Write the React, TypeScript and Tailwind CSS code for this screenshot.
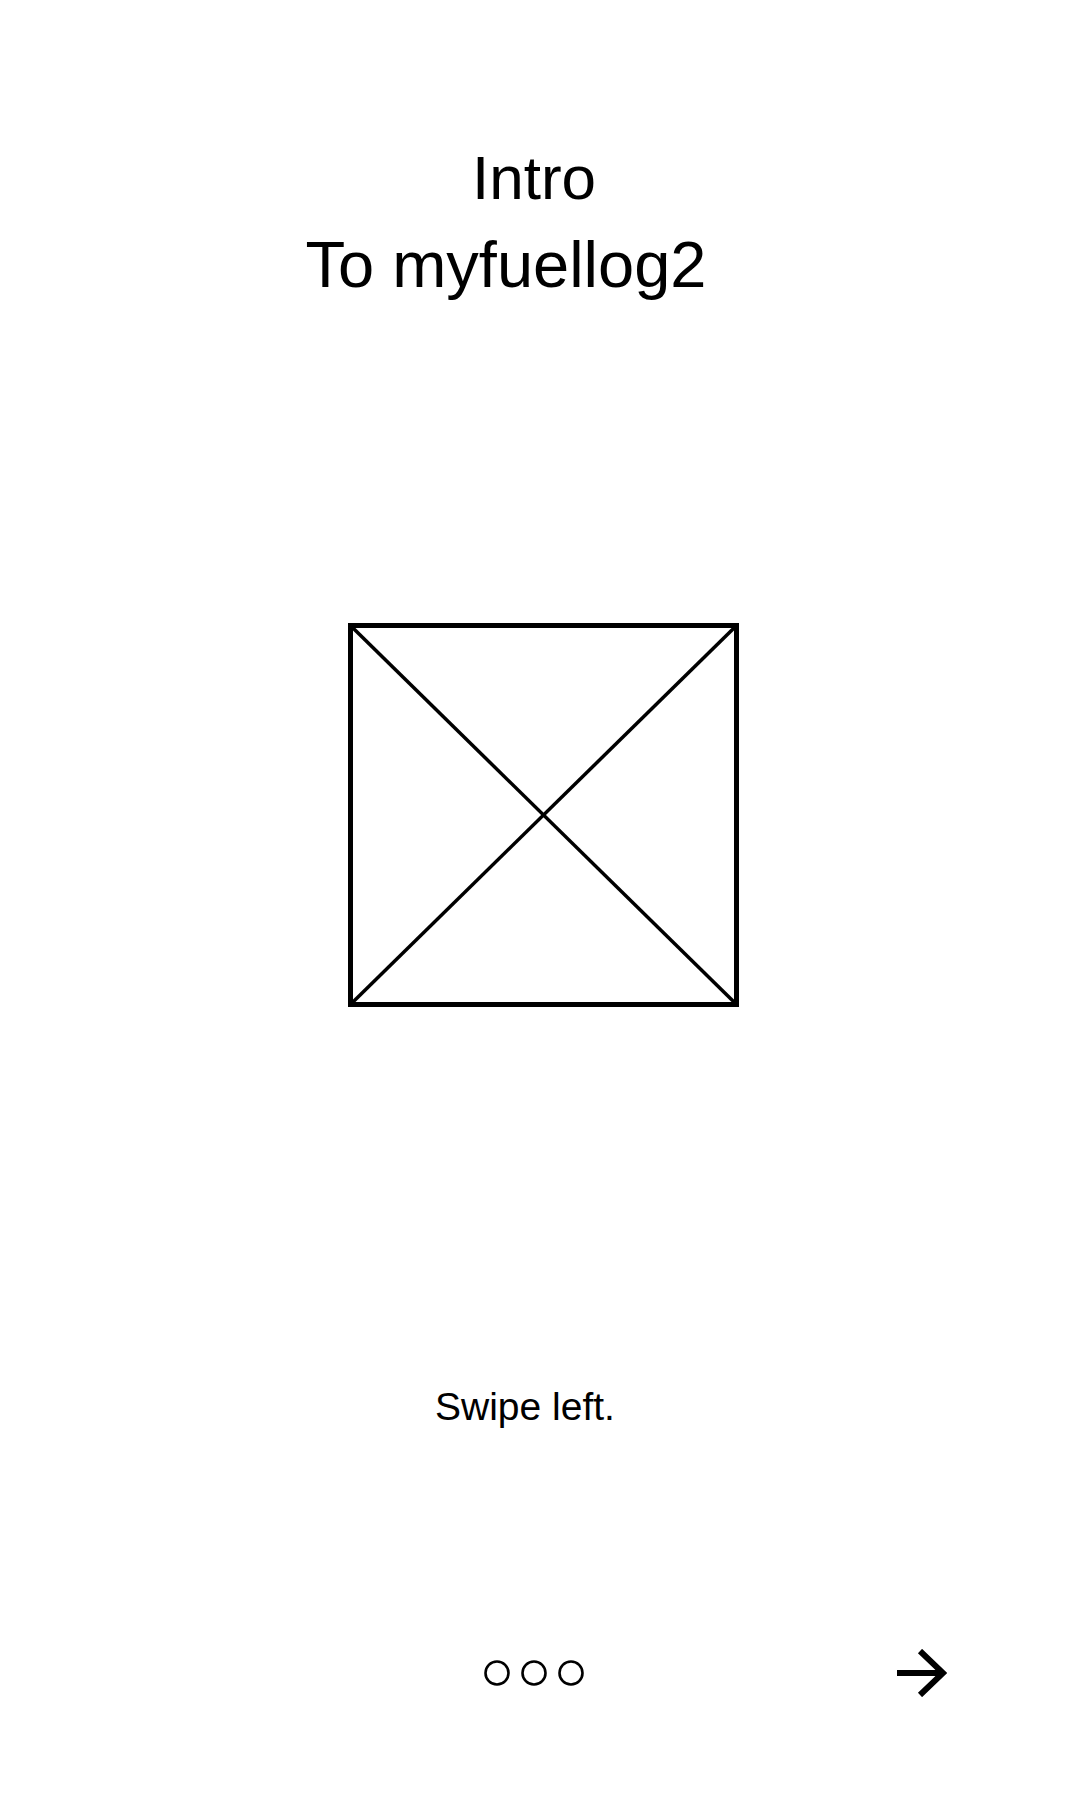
import React from 'react';

const Dot: React.FC = () => (
  <svg width="26" height="26" viewBox="0 0 26 26" className="block">
    <circle cx="13" cy="13" r="11.5" fill="none" stroke="#000" strokeWidth="2.6" />
  </svg>
);

const ArrowRight: React.FC = () => (
  <svg width="50" height="48" viewBox="0 0 50 48" className="block">
    <path d="M0 24 H46" stroke="#000" strokeWidth="6" fill="none" />
    <path d="M23 2 L46 24 L23 46" stroke="#000" strokeWidth="6" fill="none" />
  </svg>
);

export default function App() {
  return (
    <div
      className="min-h-[1800px] w-[1080px] bg-white text-black flex flex-col"
      style={{ fontFamily: '"Liberation Sans", Arial, sans-serif' }}
    >
      {/* Title */}
      <div className="pt-[134px]">
        <div className="text-center mr-[12px] text-[62px] leading-[88px]">Intro</div>
        <div className="text-center mr-[68px] text-[65px] leading-[86px]">To myfuellog2</div>
      </div>

      {/* Placeholder image */}
      <div className="mt-[315px] flex justify-center pl-[7px]">
        <div className="w-[391px] h-[384px] border-[5px] border-black">
          <svg
            width="100%"
            height="100%"
            viewBox="0 0 100 100"
            preserveAspectRatio="none"
            className="block"
          >
            <line x1="0" y1="0" x2="100" y2="100" stroke="#000" strokeWidth="3.5" vectorEffect="non-scaling-stroke" />
            <line x1="100" y1="0" x2="0" y2="100" stroke="#000" strokeWidth="3.5" vectorEffect="non-scaling-stroke" />
          </svg>
        </div>
      </div>

      {/* Hint */}
      <div className="mt-[377px] text-center text-[39px] leading-[45px] mr-[30px]">Swipe left.</div>

      {/* Pager */}
      <div className="mt-[220px] flex items-center h-[48px] pl-[484px] pr-[133px]">
        <div className="flex items-center gap-[11px]">
          <Dot />
          <Dot />
          <Dot />
        </div>
        <div className="ml-auto">
          <ArrowRight />
        </div>
      </div>
    </div>
  );
}
